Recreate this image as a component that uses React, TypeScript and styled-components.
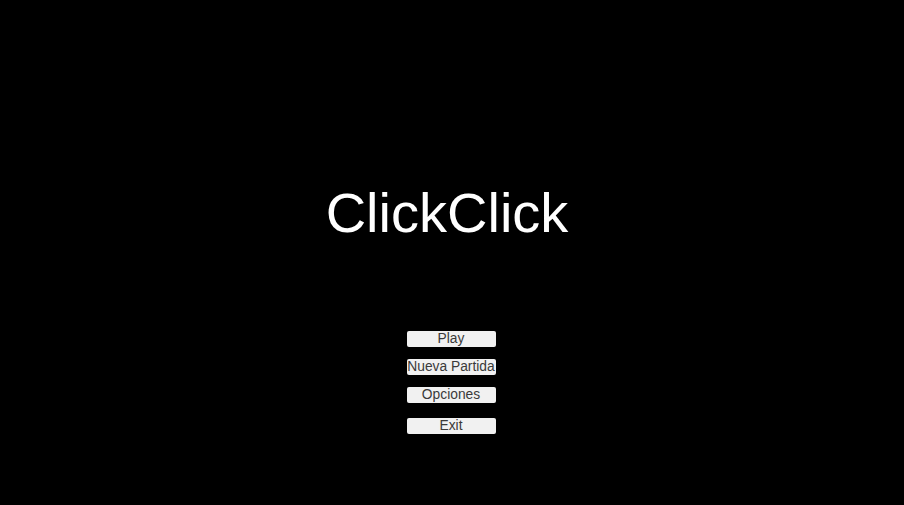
import React from 'react';
import styled, { createGlobalStyle } from 'styled-components';

const GlobalStyle = createGlobalStyle`
  html, body {
    margin: 0;
    padding: 0;
    background: #000;
  }

  #root {
    min-height: 100vh;
  }
`;

const StyledMenuScreen = styled.main`
  display: flex;
  flex-direction: column;
  align-items: center;
  min-height: 505px;
  padding-top: 185px;
  box-sizing: border-box;
  background: #000;
  font-family: 'Liberation Sans', Arial, sans-serif;
`;

const Title = styled.h1`
  margin: 0 10px 0 0;
  color: #fff;
  font-size: 56px;
  font-weight: 400;
  line-height: 56px;
`;

const ButtonList = styled.nav`
  display: flex;
  flex-direction: column;
  align-items: center;
  margin: 90px 2px 0 0;
`;

const MenuButton = styled.button<{ $gap: number }>`
  width: 89px;
  height: 16px;
  margin: 0 0 ${({ $gap }) => $gap}px;
  padding: 0;
  border: none;
  border-radius: 2px;
  background: #f1f1f1;
  color: #3a3a3a;
  font-family: inherit;
  font-size: 13.8px;
  line-height: 16px;
  white-space: nowrap;
  overflow: visible;
  cursor: pointer;
`;

const buttons = [
  { label: 'Play', gap: 12 },
  { label: 'Nueva Partida', gap: 12 },
  { label: 'Opciones', gap: 15 },
  { label: 'Exit', gap: 0 },
];

const App = () => (
  <>
    <GlobalStyle />
    <StyledMenuScreen>
      <Title>ClickClick</Title>
      <ButtonList>
        {buttons.map(({ label, gap }) => (
          <MenuButton key={label} $gap={gap}>
            {label}
          </MenuButton>
        ))}
      </ButtonList>
    </StyledMenuScreen>
  </>
);

export default App;
